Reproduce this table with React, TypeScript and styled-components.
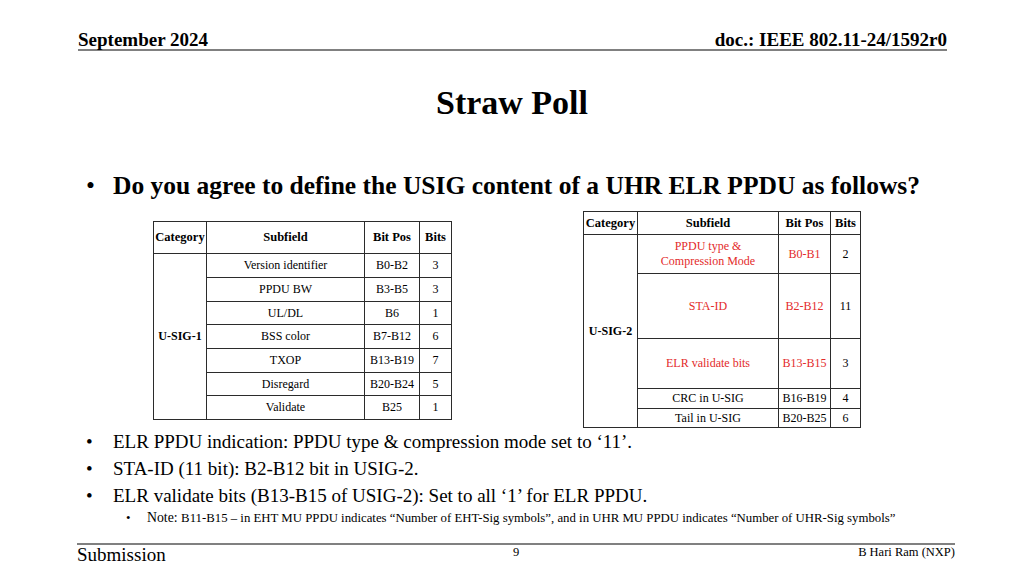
import React from "react";
import styled, { createGlobalStyle } from "styled-components";

const GlobalStyle = createGlobalStyle`
  html, body { margin: 0; padding: 0; background: #fff; }
  body { font-family: "Liberation Serif", "Times New Roman", serif; color: #000; }
`;

const Slide = styled.div`
  width: 1024px;
  height: 576px;
  display: flex;
  flex-direction: column;
  overflow: hidden;
  background: #fff;
`;

const Header = styled.header`
  margin: 31px 0 0 78px;
  width: 869px;
  display: flex;
  justify-content: space-between;
  align-items: flex-start;
  font-size: 19px;
  font-weight: bold;
  line-height: 18px;
  border-bottom: 2px solid #808080;
`;

const Title = styled.h1`
  margin: 32px 0 0;
  text-align: center;
  font-size: 34px;
  font-weight: bold;
  line-height: 40px;
`;

const Question = styled.div`
  margin-top: 48px;
  padding-left: 86px;
  display: flex;
  font-size: 25.5px;
  font-weight: bold;
  line-height: 30px;
`;

const Dot = styled.span<{ $w: number }>`
  flex: 0 0 ${(p) => p.$w}px;
  font-weight: normal;
`;

const TablesRow = styled.div`
  margin-top: 10px;
  padding-left: 153px;
  display: flex;
  align-items: flex-start;
  gap: 131px;
`;

const Table = styled.table<{ $top: number }>`
  margin-top: ${(p) => p.$top}px;
  border-collapse: collapse;
  table-layout: fixed;
  font-size: 12px;
  line-height: 15px;
`;

const Cell = styled.td<{ $red?: boolean; $bold?: boolean }>`
  border: 1px solid #2b2b2b;
  padding: 0;
  text-align: center;
  vertical-align: middle;
  color: ${(p) => (p.$red ? "#e32b2b" : "#000")};
  font-weight: ${(p) => (p.$bold ? "bold" : "normal")};
  white-space: nowrap;
`;

const HeadCell = styled(Cell).attrs({ as: "th" })`
  font-weight: bold;
  font-size: 12.5px;
`;

const BulletList = styled.ul`
  margin: 0;
  padding: 0 0 0 86px;
  list-style: none;
`;

const Item = styled.li`
  display: flex;
  font-size: 19px;
  line-height: 27px;
`;

const NoteItem = styled.li`
  display: flex;
  padding-left: 40px;
  font-size: 12.8px;
  line-height: 18px;
`;

const NoteLabel = styled.span`
  font-size: 13.8px;
`;

const Footer = styled.footer`
  margin: auto 0 0 77px;
  width: 878px;
  height: 31px;
  border-top: 2px solid #808080;
  display: grid;
  grid-template-columns: 1fr auto 1fr;
  align-items: start;
`;

const FooterLeft = styled.div`
  font-size: 19px;
  line-height: 20px;
`;

const FooterSmall = styled.div<{ $align: string }>`
  font-size: 12.5px;
  line-height: 14px;
  text-align: ${(p) => p.$align};
`;

type Row = { sub: string; pos: string; bits: string; h: number; red?: boolean };

const leftRows: Row[] = [
  { sub: "Version identifier", pos: "B0-B2", bits: "3", h: 24 },
  { sub: "PPDU BW", pos: "B3-B5", bits: "3", h: 24 },
  { sub: "UL/DL", pos: "B6", bits: "1", h: 23 },
  { sub: "BSS color", pos: "B7-B12", bits: "6", h: 24 },
  { sub: "TXOP", pos: "B13-B19", bits: "7", h: 24 },
  { sub: "Disregard", pos: "B20-B24", bits: "5", h: 23 },
  { sub: "Validate", pos: "B25", bits: "1", h: 24 },
];

const rightRows: Row[] = [
  { sub: "PPDU type &\nCompression Mode", pos: "B0-B1", bits: "2", h: 39, red: true },
  { sub: "STA-ID", pos: "B2-B12", bits: "11", h: 65, red: true },
  { sub: "ELR validate bits", pos: "B13-B15", bits: "3", h: 50, red: true },
  { sub: "CRC in U-SIG", pos: "B16-B19", bits: "4", h: 20 },
  { sub: "Tail in U-SIG", pos: "B20-B25", bits: "6", h: 19 },
];

const SigTable: React.FC<{
  top: number;
  cols: number[];
  headH: number;
  cat: string;
  rows: Row[];
}> = ({ top, cols, headH, cat, rows }) => (
  <Table $top={top} style={{ width: cols.reduce((a, b) => a + b, 0) }}>
    <colgroup>
      {cols.map((c, i) => (
        <col key={i} style={{ width: c }} />
      ))}
    </colgroup>
    <tbody>
      <tr style={{ height: headH }}>
        <HeadCell>Category</HeadCell>
        <HeadCell>Subfield</HeadCell>
        <HeadCell>Bit Pos</HeadCell>
        <HeadCell>Bits</HeadCell>
      </tr>
      {rows.map((r, i) => (
        <tr key={i} style={{ height: r.h }}>
          {i === 0 && (
            <Cell $bold rowSpan={rows.length}>
              {cat}
            </Cell>
          )}
          <Cell $red={r.red} style={{ whiteSpace: "pre-line" }}>
            {r.sub}
          </Cell>
          <Cell $red={r.red}>{r.pos}</Cell>
          <Cell>{r.bits}</Cell>
        </tr>
      ))}
    </tbody>
  </Table>
);

export default function App() {
  return (
    <>
      <GlobalStyle />
      <Slide>
        <Header>
          <span>September 2024</span>
          <span>doc.: IEEE 802.11-24/1592r0</span>
        </Header>
        <Title>Straw Poll</Title>
        <Question>
          <Dot $w={27}>•</Dot>
          <span>Do you agree to define the USIG content of a UHR ELR PPDU as follows?</span>
        </Question>
        <TablesRow>
          <SigTable top={10} cols={[53, 158, 55, 32]} headH={32} cat="U-SIG-1" rows={leftRows} />
          <SigTable top={0} cols={[54, 141, 52, 30]} headH={23} cat="U-SIG-2" rows={rightRows} />
        </TablesRow>
        <BulletList>
          <Item>
            <Dot $w={27}>•</Dot>
            <span>ELR PPDU indication: PPDU type &amp; compression mode set to ‘11’.</span>
          </Item>
          <Item>
            <Dot $w={27}>•</Dot>
            <span>STA-ID (11 bit): B2-B12 bit in USIG-2.</span>
          </Item>
          <Item>
            <Dot $w={27}>•</Dot>
            <span>ELR validate bits (B13-B15 of USIG-2): Set to all ‘1’ for ELR PPDU.</span>
          </Item>
          <NoteItem>
            <Dot $w={21}>•</Dot>
            <span>
              <NoteLabel>Note: </NoteLabel>
              B11-B15 – in EHT MU PPDU indicates “Number of EHT-Sig symbols”, and in UHR MU PPDU
              indicates “Number of UHR-Sig symbols”
            </span>
          </NoteItem>
        </BulletList>
        <Footer>
          <FooterLeft>Submission</FooterLeft>
          <FooterSmall $align="center">9</FooterSmall>
          <FooterSmall $align="right">B Hari Ram (NXP)</FooterSmall>
        </Footer>
      </Slide>
    </>
  );
}
